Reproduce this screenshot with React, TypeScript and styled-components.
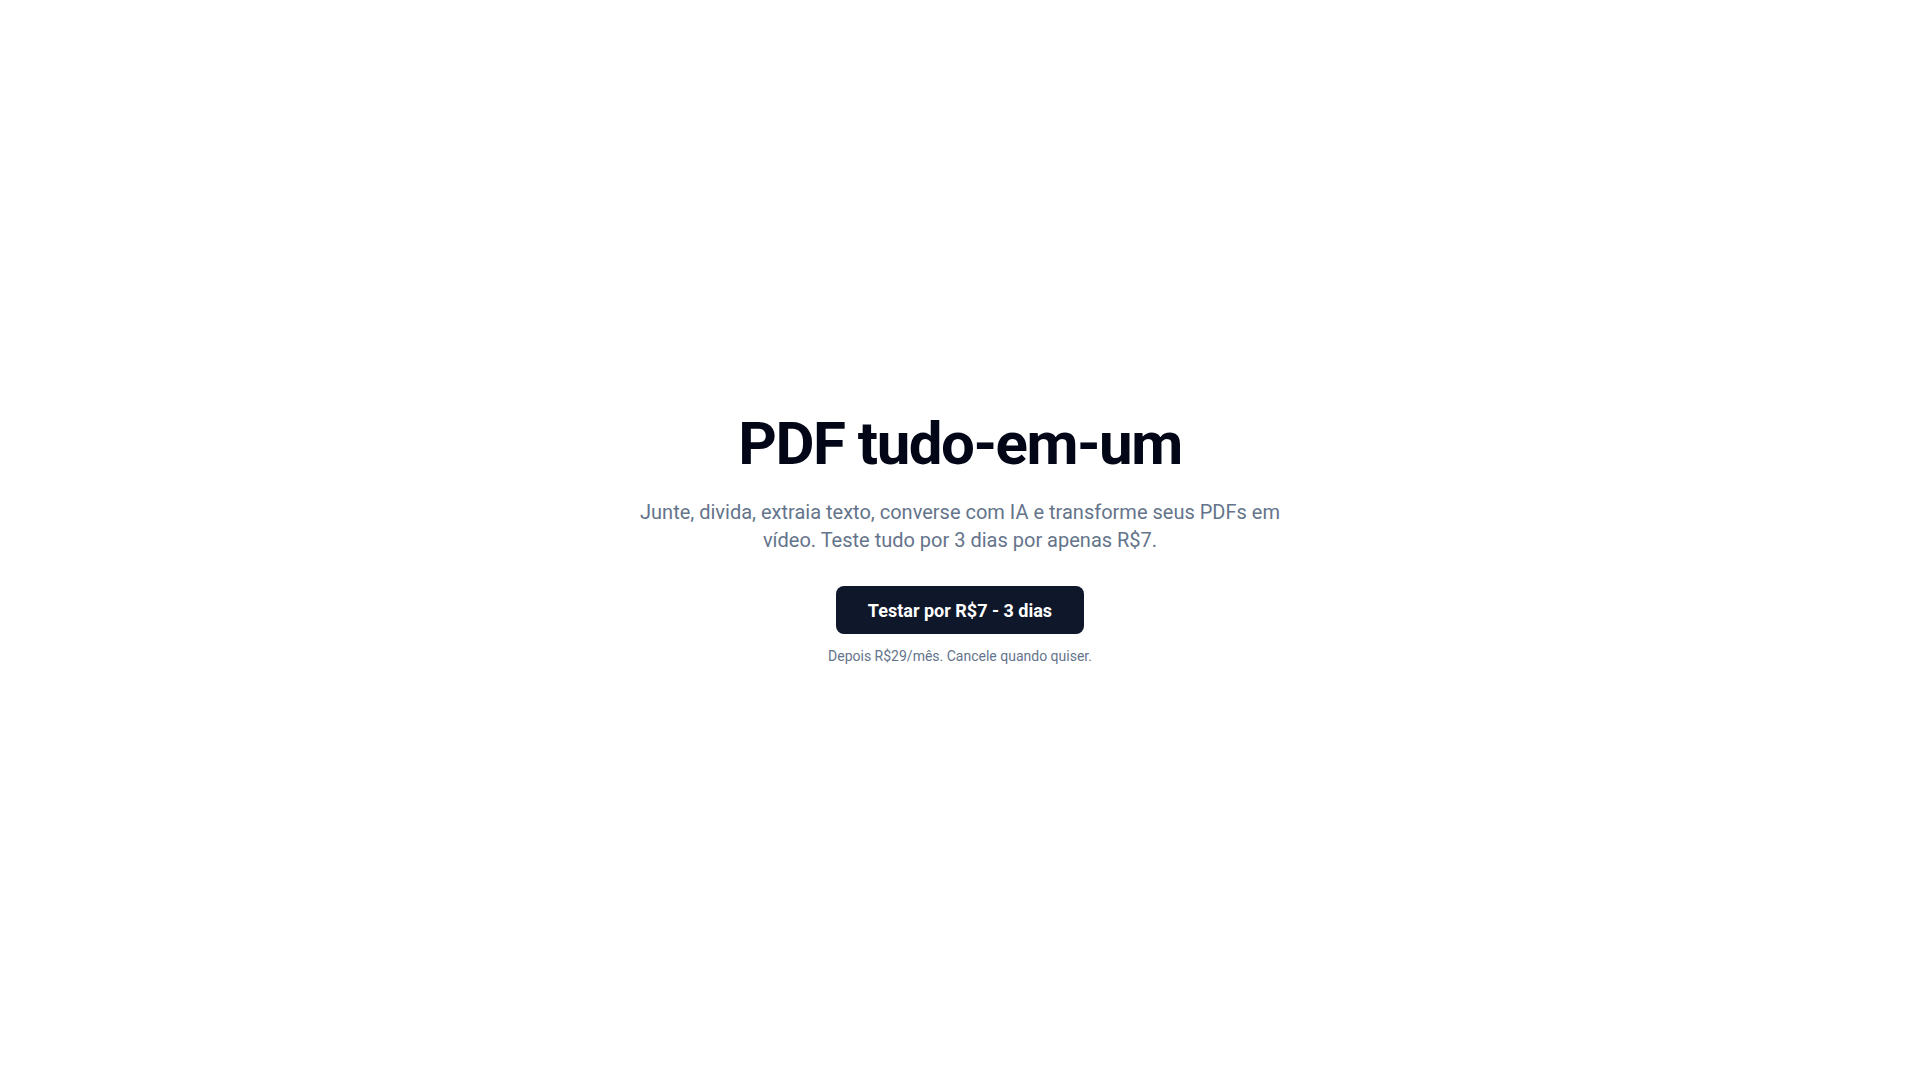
import styled, { createGlobalStyle } from "styled-components";

const GlobalStyle = createGlobalStyle`
  * {
    box-sizing: border-box;
  }
  html, body {
    margin: 0;
    padding: 0;
    background: #ffffff;
    font-family: Roboto, "Liberation Sans", Arial, sans-serif;
  }
`;

export default function App() {
  return (
    <>
      <GlobalStyle />
      <Page>
        <Hero>
          <Title>PDF tudo-em-um</Title>
          <Lead>
            Junte, divida, extraia texto, converse com IA e transforme seus
            PDFs em vídeo. Teste tudo por 3 dias por apenas R$7.
          </Lead>
          <CtaButton type="button">Testar por R$7 - 3 dias</CtaButton>
          <Note>Depois R$29/mês. Cancele quando quiser.</Note>
        </Hero>
      </Page>
    </>
  );
}

const Page = styled.main`
  min-height: 100vh;
  display: flex;
  align-items: center;
  justify-content: center;
  padding: 0 24px;
`;

const Hero = styled.section`
  display: flex;
  flex-direction: column;
  align-items: center;
  text-align: center;
  max-width: 672px;
`;

const Title = styled.h1`
  margin: 0 0 24px;
  font-size: 60px;
  line-height: 1;
  font-weight: 700;
  letter-spacing: -0.025em;
  color: #020617;
`;

const Lead = styled.p`
  margin: 0 0 32px;
  font-size: 20px;
  line-height: 28px;
  color: #64748b;
`;

const CtaButton = styled.button`
  height: 48px;
  padding: 0 32px;
  border: none;
  border-radius: 8px;
  background: #0f172a;
  color: #ffffff;
  font-family: inherit;
  font-size: 18px;
  font-weight: 700;
  cursor: pointer;
`;

const Note = styled.p`
  margin: 12px 0 0;
  font-size: 14px;
  line-height: 20px;
  color: #64748b;
`;
